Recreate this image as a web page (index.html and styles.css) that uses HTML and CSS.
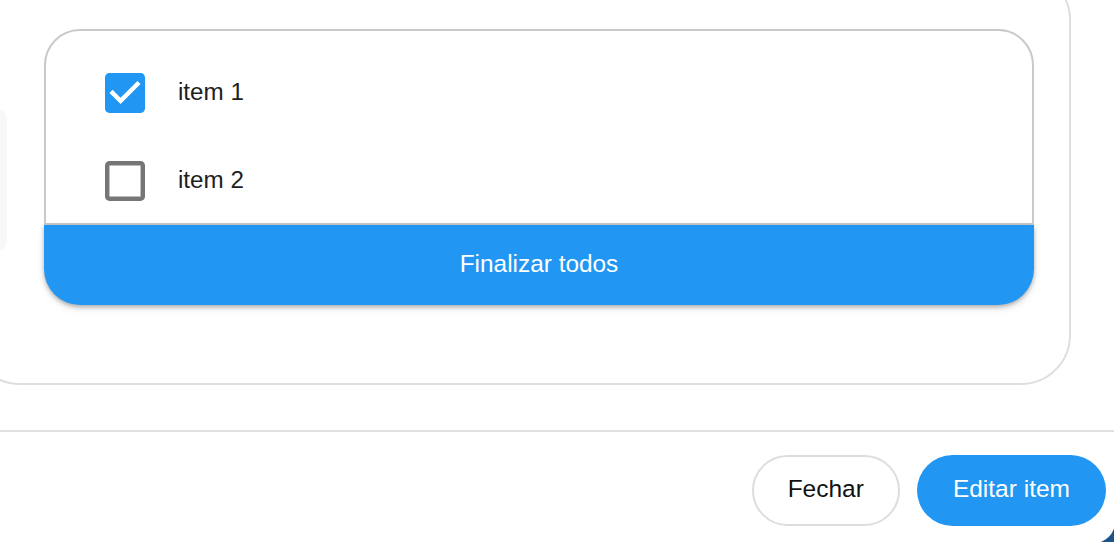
FILE: index.html
```html
<!DOCTYPE html>
<html lang="pt">
<head>
<meta charset="utf-8">
<title>Itens</title>
<link rel="stylesheet" href="styles.css">
</head>
<body>
<div class="modal">
  <div class="modal-body">
    <div class="panel">
      <div class="ghost"></div>
      <div class="card">
        <div class="list">
          <label class="row">
            <svg class="cb cb-checked" viewBox="3 3 18 18" width="40" height="40"><path d="M19 3H5c-1.11 0-2 .9-2 2v14c0 1.1.89 2 2 2h14c1.11 0 2-.9 2-2V5c0-1.1-.89-2-2-2zm-9 14l-5-5 1.41-1.41L10 14.17l7.59-7.59L19 8l-9 9z"/></svg>
            <span class="label">item 1</span>
          </label>
          <label class="row">
            <svg class="cb cb-empty" viewBox="3 3 18 18" width="40" height="40"><path d="M19 5v14H5V5h14m0-2H5c-1.1 0-2 .9-2 2v14c0 1.1.9 2 2 2h14c1.1 0 2-.9 2-2V5c0-1.1-.9-2-2-2z"/></svg>
            <span class="label">item 2</span>
          </label>
        </div>
        <button class="finish">Finalizar todos</button>
      </div>
    </div>
  </div>
  <div class="modal-footer">
    <button class="btn btn-outline">Fechar</button>
    <button class="btn btn-primary">Editar item</button>
  </div>
</div>
</body>
</html>
```

FILE: styles.css
```css
html, body {
  margin: 0;
  padding: 0;
  background: #1c5489;
  font-family: "Liberation Sans", Arial, sans-serif;
}

.modal {
  width: 1115px;
  height: 543px;
  background: #ffffff;
  border-bottom-right-radius: 21px;
  overflow: hidden;
}

.modal-body {
  height: 430px;
  border-bottom: 2px solid #e0e0e0;
  overflow: hidden;
}

.panel {
  box-sizing: border-box;
  width: 1101px;
  height: 415px;
  margin: -30px 0 0 -30px;
  border: 2px solid #dedede;
  border-radius: 50px;
  padding: 57px 0 0 5px;
  display: flex;
  align-items: flex-start;
  gap: 37px;
}

.ghost {
  flex: 0 0 30px;
  height: 144px;
  margin-top: 79px;
  background: #f8f8f8;
  border-radius: 12px;
}

.card {
  flex: 0 0 990px;
  display: flex;
  flex-direction: column;
}

.list {
  box-sizing: border-box;
  height: 196px;
  border: 2px solid #c9c9c9;
  border-radius: 36px 36px 0 0;
  padding: 18px 0 0 59px;
}

.row {
  height: 88px;
  display: flex;
  align-items: center;
  gap: 33px;
}

.cb {
  display: block;
  flex: 0 0 40px;
}

.cb-checked { fill: #2196f3; }
.cb-empty { fill: #767676; }

.label {
  font-size: 24.2px;
  color: #212121;
  padding-bottom: 3px;
}

.finish {
  height: 80px;
  width: 100%;
  border: none;
  padding: 0 0 3px;
  background: #2196f3;
  color: #ffffff;
  font-family: inherit;
  font-size: 24.4px;
  border-radius: 0 0 36px 36px;
  box-shadow: 0 2px 4px rgba(0, 0, 0, 0.28), 0 4px 10px rgba(0, 0, 0, 0.08);
}

.modal-footer {
  display: flex;
  justify-content: flex-end;
  gap: 17px;
  padding: 23px 9px 0 0;
}

.btn {
  height: 71px;
  border-radius: 36px;
  font-family: inherit;
  font-size: 24.5px;
  padding-bottom: 4px;
}

.btn-outline {
  padding-left: 34px;
  padding-right: 34px;
  background: #ffffff;
  border: 2px solid #dddddd;
  color: #111111;
}

.btn-primary {
  padding-left: 36px;
  padding-right: 36px;
  background: #2196f3;
  border: none;
  color: #ffffff;
}
```
